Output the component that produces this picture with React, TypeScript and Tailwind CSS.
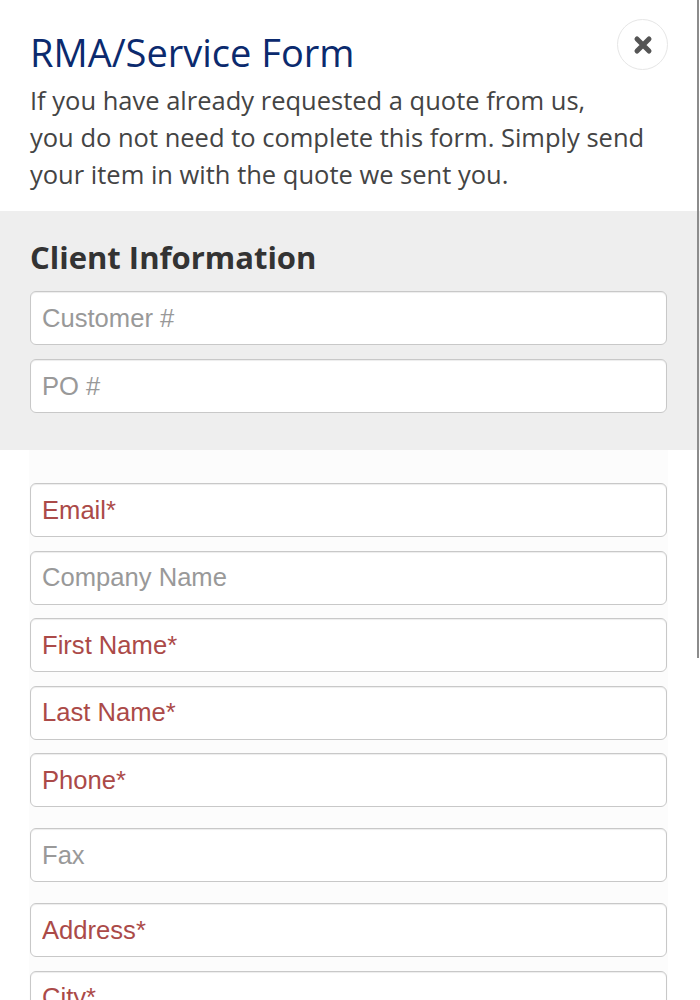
import React from "react";

const clientFields = [
  { label: "Customer #", req: false },
  { label: "PO #", req: false },
];

const contactFields: { label: string; req: boolean; mt?: string }[] = [
  { label: "Email*", req: true },
  { label: "Company Name", req: false },
  { label: "First Name*", req: true },
  { label: "Last Name*", req: true },
  { label: "Phone*", req: true },
  { label: "Fax", req: false, mt: "mt-[7.5px]" },
  { label: "Address*", req: true, mt: "mt-[7.5px]" },
  { label: "City*", req: true },
];

function Field({ label, req }: { label: string; req: boolean }) {
  return (
    <input
      type="text"
      placeholder={label}
      className={
        "block w-[637px] h-[54px] rounded-[6px] border border-[#c8c8c8] bg-white px-[11px] text-[25.6px] text-[#555] shadow-[inset_0_1px_1px_rgba(0,0,0,0.075)] outline-none " +
        (req ? "placeholder:text-[#ab4a48]" : "placeholder:text-[#999]")
      }
      style={{ fontFamily: '"Liberation Sans", Arial, Helvetica, sans-serif' }}
    />
  );
}

export default function App() {
  return (
    <div
      className="relative w-[700px] min-h-[1000px] bg-white overflow-hidden"
      style={{ fontFamily: '"Open Sans", "Noto Sans", sans-serif' }}
    >
      <div className="relative px-[30px] pt-[32px] pb-[18px]">
        <h1 className="text-[38px] leading-[40px] text-[#0b2a6e] font-normal">
          RMA/Service Form
        </h1>
        <p className="mt-[10px] text-[25.5px] leading-[37px] text-[#444]">
          If you have already requested a quote from us,
          <br />
          you do not need to complete this form. Simply send
          <br />
          your item in with the quote we sent you.
        </p>
        <button
          type="button"
          className="absolute right-[32px] top-[19px] flex h-[51px] w-[51px] items-center justify-center rounded-full border border-[#e6e6e6] bg-white"
        >
          <svg width="20" height="20" viewBox="0 0 20 20">
            <path
              d="M4 4 L16 16 M16 4 L4 16"
              stroke="#555"
              strokeWidth="5"
              strokeLinecap="round"
              fill="none"
            />
          </svg>
        </button>
      </div>

      <div className="bg-[#eeeeee] px-[30px] pt-[26px] pb-[37px]">
        <h2 className="text-[31px] leading-[40px] font-bold text-[#333]">
          Client Information
        </h2>
        <div className="mt-[14px] flex flex-col gap-[14px]">
          {clientFields.map((f) => (
            <Field key={f.label} label={f.label} req={f.req} />
          ))}
        </div>
      </div>

      <div className="ml-[29px] w-[639px] bg-[#fcfcfc] pl-[1px] pt-[33px] pb-[20px]">
        <div className="flex flex-col gap-[13.5px]">
          {contactFields.map((f) => (
            <div key={f.label} className={f.mt ?? ""}>
              <Field label={f.label} req={f.req} />
            </div>
          ))}
        </div>
      </div>

      <div className="absolute right-[1px] top-0 h-[658px] w-[2px] bg-[#8c8c8c]" />
    </div>
  );
}
